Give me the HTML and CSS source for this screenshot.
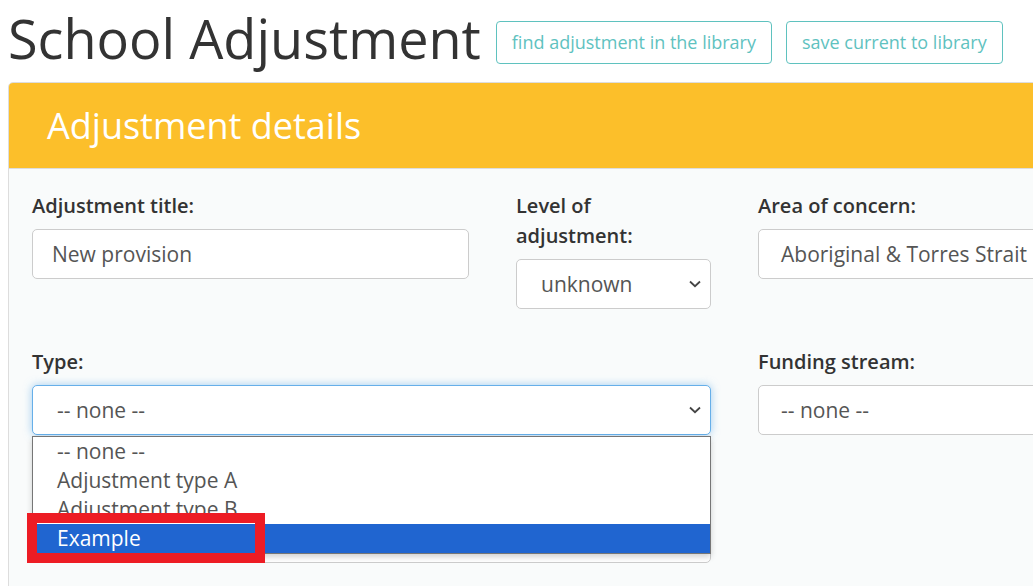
FILE: index.html
```html
<!DOCTYPE html>
<html lang="en">
<head>
<meta charset="utf-8">
<title>School Adjustment</title>
<link rel="stylesheet" href="styles.css">
</head>
<body>
<div class="page">
  <header class="page-header">
    <h1 class="page-title">School Adjustment</h1>
    <button class="btn-outline">find adjustment in the library</button>
    <button class="btn-outline">save current to library</button>
  </header>

  <section class="panel">
    <div class="panel-heading">Adjustment details</div>
    <div class="panel-body">
      <div class="form-grid">
        <div class="field">
          <label class="field-label">Adjustment title:</label>
          <div class="control control-input">New provision</div>
        </div>
        <div class="field">
          <label class="field-label">Level of adjustment:</label>
          <div class="control control-select">
            <span>unknown</span>
            <svg class="chevron" width="12" height="8" viewBox="0 0 12 8"><path d="M1 1.5 L6 6.2 L11 1.5" fill="none" stroke="#444" stroke-width="1.8"/></svg>
          </div>
        </div>
        <div class="field">
          <label class="field-label">Area of concern:</label>
          <div class="control control-wide">Aboriginal &amp; Torres Strait Islander</div>
        </div>

        <div class="field span-2 has-popup">
          <label class="field-label">Type:</label>
          <div class="control control-select is-focused">
            <span>-- none --</span>
            <svg class="chevron" width="12" height="8" viewBox="0 0 12 8"><path d="M1 1.5 L6 6.2 L11 1.5" fill="none" stroke="#444" stroke-width="1.8"/></svg>
          </div>
          <ul class="dropdown">
            <li class="option">-- none --</li>
            <li class="option">Adjustment type A</li>
            <li class="option">Adjustment type B</li>
            <li class="option is-selected">Example</li>
            <li class="annotation"></li>
          </ul>
        </div>
        <div class="field">
          <label class="field-label">Funding stream:</label>
          <div class="control control-wide">-- none --</div>
        </div>

        <div class="field span-2">
          <label class="field-label">Description:</label>
          <div class="control control-area"></div>
        </div>
      </div>
    </div>
  </section>
</div>
</body>
</html>
```

FILE: styles.css
```css
html, body {
  margin: 0;
  padding: 0;
  background: #ffffff;
  overflow: hidden;
}

body {
  font-family: "Open Sans", "Liberation Sans", sans-serif;
  color: #333333;
}

.page {
  padding: 8px 0 0 8px;
  width: 1300px;
}

.page-header {
  display: flex;
  align-items: flex-start;
  gap: 14px;
}

.page-title {
  margin: 0;
  font-size: 54px;
  line-height: 60px;
  font-weight: 400;
  color: #333333;
  margin-right: 1px;
}

.btn-outline {
  margin-top: 13px;
  height: 43px;
  padding: 0 15px;
  background: #ffffff;
  border: 1px solid #5fc2bf;
  border-radius: 4px;
  color: #5fc2bf;
  font-family: "Open Sans", "Liberation Sans", sans-serif;
  font-size: 18px;
  line-height: 41px;
}

.panel {
  margin-top: 14px;
  width: 1250px;
  border: 1px solid #dddddd;
  border-radius: 5px;
  background: #f9fbfb;
  height: 560px;
}

.panel-heading {
  height: 85px;
  background: #fcbf2a;
  border-bottom: 1px solid #dddddd;
  border-radius: 4px 4px 0 0;
  color: #ffffff;
  font-size: 36px;
  line-height: 85px;
  padding-left: 38px;
}

.panel-body {
  padding: 22px 23px;
}

.form-grid {
  display: grid;
  grid-template-columns: 437px 195px 437px;
  column-gap: 47px;
  row-gap: 38px;
  align-items: start;
}

.field {
  display: flex;
  flex-direction: column;
  gap: 8px;
}

.span-2 {
  grid-column: span 2;
}

.has-popup {
  position: relative;
}

.field-label {
  font-size: 20px;
  line-height: 30px;
  font-weight: 600;
  color: #333333;
}

.control {
  box-sizing: border-box;
  height: 50px;
  border: 1px solid #cccccc;
  border-radius: 5px;
  background: #ffffff;
  font-size: 21px;
  line-height: 48px;
  color: #555555;
  white-space: nowrap;
  overflow: hidden;
}

.control-input {
  padding-left: 19px;
}

.control-wide {
  padding-left: 22px;
}

.control-select {
  display: flex;
  align-items: center;
  justify-content: space-between;
  padding: 0 8px 0 24px;
}

.chevron {
  flex: none;
  margin-right: 1px;
}

.is-focused {
  border-color: #66afe9;
  box-shadow: 0 0 8px rgba(102, 175, 233, 0.6);
}

.control-area {
  height: 52px;
}

.dropdown {
  position: absolute;
  left: 0;
  right: 0;
  top: calc(100% + 1px);
  margin: 0;
  padding: 0;
  list-style: none;
  background: #ffffff;
  border: 1px solid #767676;
  box-shadow: 0 3px 6px rgba(0, 0, 0, 0.18);
  z-index: 2;
}

.option {
  height: 29px;
  line-height: 29px;
  padding-left: 24px;
  font-size: 21px;
  color: #555555;
}

.option.is-selected {
  background: #2065d0;
  color: #ffffff;
}

.annotation {
  position: absolute;
  left: -6px;
  top: 76px;
  width: 218px;
  height: 30px;
  border: 10px solid #ed1c24;
  box-shadow: inset 0 1px 0 #ffffff;
}
```
